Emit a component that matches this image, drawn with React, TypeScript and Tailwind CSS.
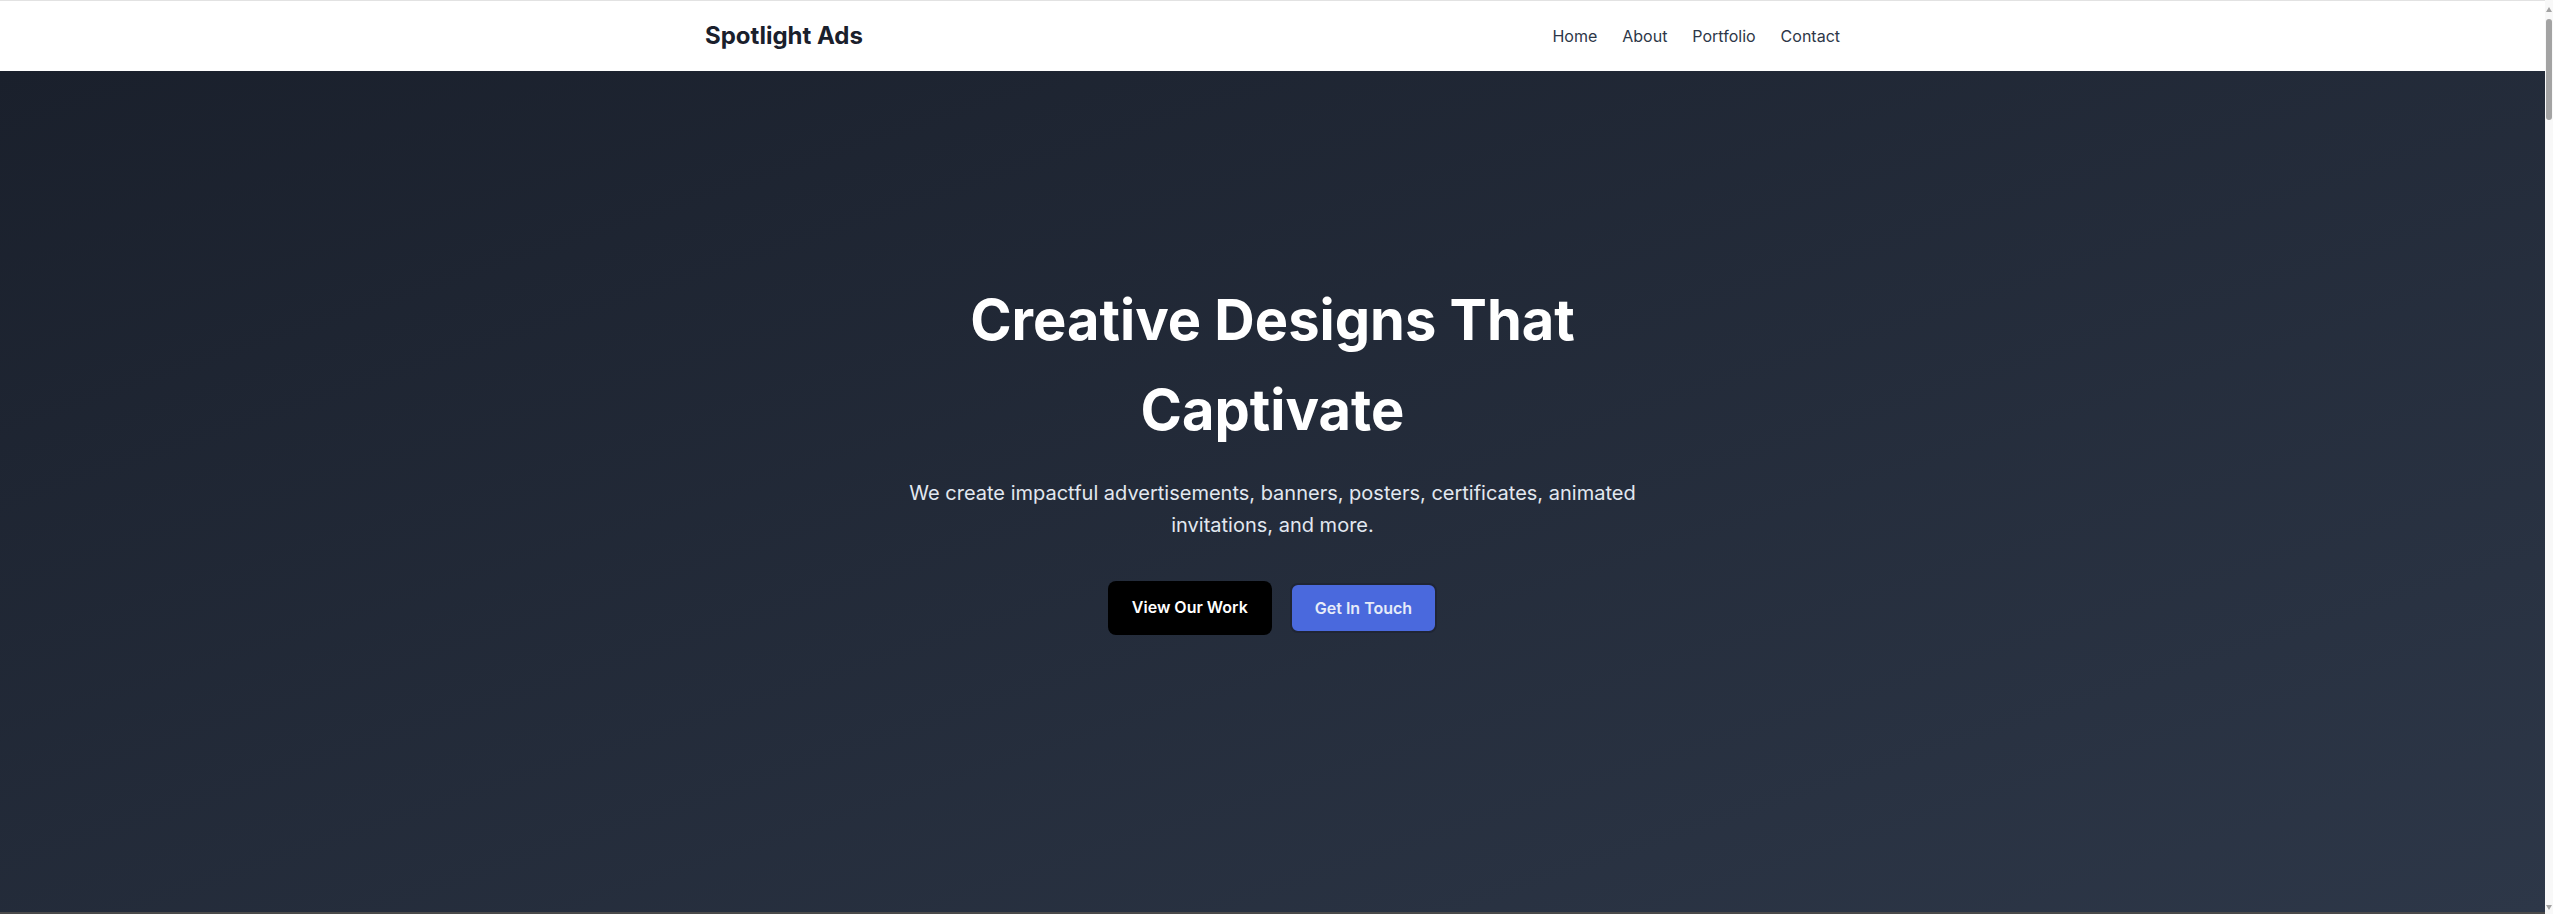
const navLinks = [
  { href: "#home", label: "Home" },
  { href: "#about", label: "About" },
  { href: "#portfolio", label: "Portfolio" },
  { href: "#contact", label: "Contact" }
];

function Header() {
  return (
    <header className="h-[71px] border-t border-[#e2e2e2] bg-white">
      <div className="mx-auto flex h-full max-w-[1135px] items-center justify-between">
        <a href="#home" className="text-[24px] font-bold text-[#1a202c]">
          Spotlight Ads
        </a>
        <nav aria-label="Main navigation" className="flex items-center gap-[25px]">
          {navLinks.map((item) => (
            <a key={item.href} href={item.href} className="text-[16px] text-[#2d3748] hover:text-[#1a202c]">
              {item.label}
            </a>
          ))}
        </nav>
      </div>
    </header>
  );
}

function Hero() {
  return (
    <section
      id="home"
      className="flex h-[841px] flex-col items-center bg-linear-to-br from-[#1a202c] to-[#2d3748] pt-[204px] text-center"
    >
      <h1 className="max-w-[700px] text-[56px] font-bold leading-[90px] text-white">
        Creative Designs That Captivate
      </h1>
      <p className="mt-[22px] max-w-[768px] text-[20px] leading-[32px] text-[#e2e8f0]">
        We create impactful advertisements, banners, posters, certificates, animated invitations, and more.
      </p>
      <div className="mt-[40px] flex items-start gap-[18px]">
        <a
          href="#portfolio"
          className="flex h-[54px] items-center rounded-lg bg-black px-[24px] pb-[2px] text-[16px] font-semibold text-white"
        >
          View Our Work
        </a>
        <a
          href="#contact"
          className="mt-[2px] flex h-[50px] items-center rounded-lg border-2 border-[#1f2535] bg-[#4a69dd] px-[23px] text-[16px] font-semibold text-[#e6ecf8]"
        >
          Get In Touch
        </a>
      </div>
    </section>
  );
}

// page scrollbar as it shows in the screenshot
function ScrollTrack() {
  return (
    <div className="fixed right-0 top-0 flex h-screen w-[8px] flex-col items-center bg-[#f8f8f8]">
      <span className="mt-[7px] h-0 w-0 border-x-[3px] border-b-[5px] border-x-transparent border-b-[#a3a3a3]" />
      <span className="mt-[7px] h-[101px] w-[6px] rounded-full bg-[#a3a3a3]" />
      <span className="mb-[4px] mt-auto h-0 w-0 border-x-[3px] border-t-[5px] border-x-transparent border-t-[#a3a3a3]" />
    </div>
  );
}

export default function App() {
  return (
    <div className="min-h-screen bg-white pr-[8px] font-['Inter','Liberation_Sans',sans-serif]">
      <Header />
      <Hero />
      <section id="about" className="h-[600px] border-t-2 border-[#4a4a4a] bg-[#1e1e1e]" />
      <ScrollTrack />
    </div>
  );
}
